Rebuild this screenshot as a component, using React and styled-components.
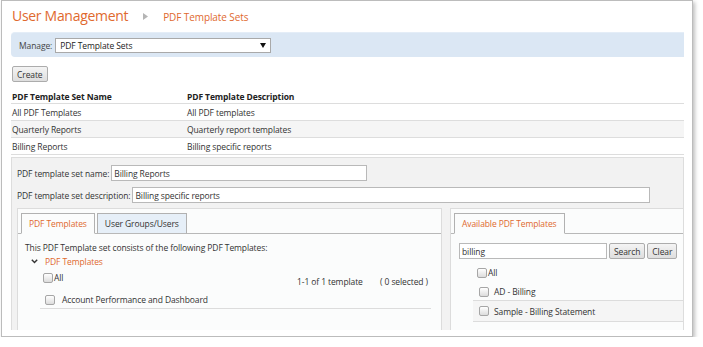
import React from "react";
import styled, { createGlobalStyle } from "styled-components";

const GlobalStyle = createGlobalStyle`
  html, body {
    margin: 0;
    padding: 0;
    background: #ffffff;
  }
  body {
    font-family: "Open Sans", "Noto Sans", sans-serif;
    font-size: 8.5px;
    letter-spacing: -0.1px;
    color: #333;
  }
  * {
    box-sizing: border-box;
  }
`;

const orange = "#e0692e";

function App() {
  return (
    <>
      <GlobalStyle />
      <Frame>
        <Header>
          <Title>User Management</Title>
          <Crumb>
            <svg width="5" height="7" viewBox="0 0 5 7">
              <path d="M0 0 L5 3.5 L0 7 Z" fill="#b5b5b5" />
            </svg>
          </Crumb>
          <SubTitle>PDF Template Sets</SubTitle>
        </Header>

        <ManageBar>
          <span>Manage:</span>
          <Select>
            <span>PDF Template Sets</span>
            <svg width="6" height="5" viewBox="0 0 6 5">
              <path d="M0 0 L6 0 L3 5 Z" fill="#111" />
            </svg>
          </Select>
        </ManageBar>

        <Button $mt={9}>Create</Button>

        <Table>
          <HeadRow>
            <NameCell>PDF Template Set Name</NameCell>
            <Cell>PDF Template Description</Cell>
          </HeadRow>
          <Row>
            <NameCell>All PDF Templates</NameCell>
            <Cell>All PDF templates</Cell>
          </Row>
          <Row $alt>
            <NameCell>Quarterly Reports</NameCell>
            <Cell>Quarterly report templates</Cell>
          </Row>
          <Row>
            <NameCell>Billing Reports</NameCell>
            <Cell>Billing specific reports</Cell>
          </Row>
        </Table>

        <Detail>
          <Field>
            <span>PDF template set name:</span>
            <TextInput $w={256}>Billing Reports</TextInput>
          </Field>
          <Field $mt={6}>
            <span>PDF template set description:</span>
            <TextInput $w={518}>Billing specific reports</TextInput>
          </Field>

          <Panels>
            <LeftPanel>
              <Tabs>
                <Tab $active>PDF Templates</Tab>
                <Tab>User Groups/Users</Tab>
              </Tabs>
              <PanelBody>
                <Intro>This PDF Template set consists of the following PDF Templates:</Intro>
                <Tree>
                  <svg width="7" height="5" viewBox="0 0 7 5">
                    <path d="M0.8 0.8 L3.5 3.6 L6.2 0.8" stroke="#333" strokeWidth="1.4" fill="none" />
                  </svg>
                  <span>PDF Templates</span>
                </Tree>
                <AllRow>
                  <CheckLabel>
                    <Box />
                    <span>All</span>
                  </CheckLabel>
                  <Count>1-1 of 1 template</Count>
                  <Selected>( 0 selected )</Selected>
                </AllRow>
                <ItemRow>
                  <Box />
                  <span>Account Performance and Dashboard</span>
                </ItemRow>
              </PanelBody>
            </LeftPanel>

            <RightPanel>
              <Tabs>
                <Tab $active>Available PDF Templates</Tab>
              </Tabs>
              <SearchRow>
                <TextInput $w={148}>billing</TextInput>
                <Button>Search</Button>
                <Button>Clear</Button>
              </SearchRow>
              <AvailAll>
                <Box />
                <span>All</span>
              </AvailAll>
              <AvailItem>
                <Box />
                <span>AD - Billing</span>
              </AvailItem>
              <AvailItem $alt>
                <Box />
                <span>Sample - Billing Statement</span>
              </AvailItem>
            </RightPanel>
          </Panels>
        </Detail>
      </Frame>
    </>
  );
}

export default App;

const Frame = styled.div`
  margin-left: 1px;
  width: 692px;
  height: 337px;
  border: 1px solid #bcbcbc;
  box-shadow: 2px 2px 4px rgba(0, 0, 0, 0.25);
  padding: 0 4px 6px 9px;
  overflow: hidden;
  display: flex;
  flex-direction: column;
`;

const Header = styled.div`
  height: 31px;
  display: flex;
  align-items: center;
  padding-bottom: 2px;
`;

const Title = styled.div`
  font-size: 14px;
  letter-spacing: -0.3px;
  color: ${orange};
  padding-left: 1px;
`;

const Crumb = styled.div`
  display: flex;
  margin: 1px 15px 0 15px;
`;

const SubTitle = styled.div`
  font-size: 10px;
  color: ${orange};
  padding-top: 2px;
`;

const ManageBar = styled.div`
  height: 25px;
  margin-right: 4px;
  background: #dbe7f4;
  border-top: 1px solid #e4edf7;
  border-radius: 4px 0 0 4px;
  display: flex;
  align-items: center;
  padding-left: 8px;
  gap: 3px;
  color: #444;
`;

const Select = styled.div`
  width: 216px;
  height: 15px;
  background: #fff;
  border: 1px solid #a9a9a9;
  display: flex;
  align-items: center;
  justify-content: space-between;
  padding: 0 4px 0 4px;
  color: #222;
`;

const Button = styled.div`
  align-self: flex-start;
  margin-top: ${(p) => p.$mt || 0}px;
  margin-left: 1px;
  height: 16px;
  padding: 0 4px;
  display: flex;
  align-items: center;
  border: 1px solid #acacac;
  border-radius: 2px;
  background: linear-gradient(#f4f4f4, #dedede);
  color: #333;
`;

const Table = styled.div`
  margin-top: 7px;
  margin-right: 4px;
`;

const HeadRow = styled.div`
  height: 15px;
  display: flex;
  align-items: center;
  font-weight: 700;
  color: #222;
  border-bottom: 1px solid #dddddd;
  padding-left: 1px;
`;

const Row = styled.div`
  height: 17px;
  display: flex;
  align-items: center;
  background: ${(p) => (p.$alt ? "#f5f5f5" : "#ffffff")};
  border-bottom: 1px solid #dddddd;
  padding-left: 1px;
  color: #333;
`;

const NameCell = styled.div`
  width: 175px;
`;

const Cell = styled.div`
  flex: 1;
`;

const Detail = styled.div`
  margin-top: 2px;
  margin-right: 4px;
  flex: 1;
  background: #f2f2f2;
  border: 1px solid #dddddd;
  border-bottom: none;
  padding: 7px 0 0 5px;
  display: flex;
  flex-direction: column;
`;

const Field = styled.div`
  display: flex;
  align-items: center;
  gap: 2px;
  margin-top: ${(p) => p.$mt || 0}px;
  color: #333;
`;

const TextInput = styled.div`
  width: ${(p) => p.$w}px;
  height: 16px;
  background: #fff;
  border: 1px solid #b9b9b9;
  display: flex;
  align-items: center;
  padding-left: 2px;
  color: #333;
`;

const Panels = styled.div`
  flex: 1;
  display: flex;
  gap: 8px;
  margin-top: 5px;
`;

const PanelBase = styled.div`
  background: #fbfcfc;
  border: 1px solid #dcdcdc;
  border-bottom: none;
  padding-top: 4px;
  display: flex;
  flex-direction: column;
`;

const LeftPanel = styled(PanelBase)`
  width: 425px;
`;

const RightPanel = styled(PanelBase)`
  flex: 1;
  border-right: none;
`;

const Tabs = styled.div`
  display: flex;
  gap: 2px;
  padding-left: 3px;
  border-bottom: 1px solid #b8b8b8;
`;

const Tab = styled.div`
  height: 21px;
  margin-bottom: -1px;
  padding: 0 7px;
  display: flex;
  align-items: center;
  border: 1px solid #b1b1b1;
  border-bottom-color: ${(p) => (p.$active ? "#fbfcfc" : "#b8b8b8")};
  background: ${(p) => (p.$active ? "#fbfcfc" : "#e6eff8")};
  color: ${(p) => (p.$active ? orange : "#333")};
`;

const PanelBody = styled.div`
  padding: 8px 0 0 7px;
  display: flex;
  flex-direction: column;
`;

const Intro = styled.div`
  color: #333;
`;

const Tree = styled.div`
  display: flex;
  align-items: center;
  gap: 7px;
  margin-top: 3px;
  padding-left: 6px;
  color: ${orange};
`;

const Box = styled.span`
  display: inline-block;
  width: 10px;
  height: 10px;
  border: 1px solid #a6a6a6;
  border-radius: 2px;
  background: linear-gradient(#ffffff, #dcdcdc);
  flex: none;
`;

const CheckLabel = styled.div`
  display: flex;
  align-items: flex-end;
  gap: 1px;
  width: 254px;
`;

const AllRow = styled.div`
  display: flex;
  align-items: flex-start;
  margin-top: 5px;
  padding-left: 18px;
  color: #333;
`;

const Count = styled.div`
  width: 83px;
  padding-top: 4px;
`;

const Selected = styled.div`
  padding-top: 4px;
`;

const ItemRow = styled.div`
  display: flex;
  align-items: center;
  gap: 7px;
  height: 18px;
  margin: 4px 10px 0 15px;
  padding-left: 5px;
  border-bottom: 1px solid #dcdcdc;
  color: #333;
`;

const SearchRow = styled.div`
  display: flex;
  gap: 2px;
  padding: 9px 0 0 8px;
  & > div {
    margin-left: 0;
  }
`;

const AvailAll = styled.div`
  display: flex;
  align-items: flex-end;
  gap: 1px;
  margin: 8px 0 0 26px;
  color: #333;
`;

const AvailItem = styled.div`
  display: flex;
  align-items: center;
  gap: 5px;
  height: ${(p) => (p.$alt ? 21 : 18)}px;
  margin-left: 22px;
  margin-top: ${(p) => (p.$alt ? 0 : 5)}px;
  padding-left: 6px;
  background: ${(p) => (p.$alt ? "#f5f5f5" : "transparent")};
  border-bottom: 1px solid #dcdcdc;
  color: #333;
`;
